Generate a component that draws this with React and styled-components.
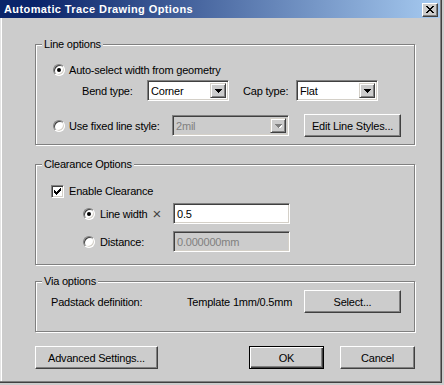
import React from "react";
import styled, { createGlobalStyle } from "styled-components";

const FACE = "#cccccc";

const GlobalStyle = createGlobalStyle`
  html, body {
    margin: 0;
    padding: 0;
    background: ${FACE};
  }
  body {
    font-family: "Liberation Sans", Arial, sans-serif;
    font-size: 11px;
    color: #000;
  }
`;

const Screen = styled.div`
  width: 444px;
  height: 385px;
  background: ${FACE};
`;

const Frame = styled.div`
  box-sizing: border-box;
  width: 442px;
  height: 383px;
  background: ${FACE};
  box-shadow: inset -1px -1px 0 #404040, inset -2px -2px 0 #808080,
    inset 1px 0 0 #e4e4e4, inset 2px 0 0 #ffffff;
  display: flex;
  flex-direction: column;
`;

const TitleBar = styled.div`
  height: 18px;
  margin-right: 2px;
  display: flex;
  align-items: center;
  background: linear-gradient(to right, #0a246a 0%, #0a246a 8%, #a6caf0 100%);
  color: #fff;
  font-weight: bold;
  font-size: 11px;
  padding-left: 4px;
  letter-spacing: 0.4px;
`;

const TitleText = styled.span`
  flex: 1;
  white-space: nowrap;
`;

const CloseButton = styled.div`
  box-sizing: border-box;
  width: 16px;
  height: 14px;
  margin: 1px 2px 0 0;
  background: ${FACE};
  border: 1px solid;
  border-color: #ffffff #404040 #404040 #ffffff;
  box-shadow: inset -1px -1px 0 #808080;
  display: flex;
  align-items: center;
  justify-content: center;
`;

const Body = styled.div`
  padding: 26px 0 0 35px;
  display: flex;
  flex-direction: column;
`;

const GroupBox = styled.div`
  position: relative;
  box-sizing: border-box;
  width: 380px;
  height: ${(p) => p.$h}px;
  margin-top: ${(p) => p.$mt || 0}px;
  padding: ${(p) => p.$pt}px 0 0 ${(p) => p.$pl}px;
  border: 1px solid #808080;
  box-shadow: inset 1px 1px 0 #ffffff, 1px 1px 0 #ffffff;
  display: flex;
  flex-direction: column;
`;

const GroupTitle = styled.span`
  position: absolute;
  top: -7px;
  left: 6px;
  padding: 0 2px;
  line-height: 13px;
  background: ${FACE};
  letter-spacing: -0.2px;
`;

const Row = styled.div`
  display: flex;
  align-items: center;
  height: ${(p) => p.$h}px;
  margin-top: ${(p) => p.$mt || 0}px;
  padding-left: ${(p) => p.$indent || 0}px;
`;

const Label = styled.span`
  flex: none;
  display: flex;
  align-items: center;
  width: ${(p) => (p.$w ? `${p.$w}px` : "auto")};
  margin-left: ${(p) => p.$ml || 0}px;
  white-space: nowrap;
  letter-spacing: -0.2px;
  color: ${(p) => (p.$disabled ? "#808080" : "#000")};
`;

const Times = styled.span`
  font-size: 15px;
  font-weight: 300;
  line-height: 11px;
  color: #444;
  margin-left: 5px;
`;

const RadioDot = styled.span`
  position: relative;
  flex: none;
  box-sizing: border-box;
  width: 12px;
  height: 12px;
  border-radius: 50%;
  background: #fff;
  border: 1px solid;
  border-color: #808080 #ffffff #ffffff #808080;
  box-shadow: inset 1px 1px 0 #404040, inset -1px -1px 0 #d4d0c8;

  &::after {
    content: "";
    display: ${(p) => (p.$checked ? "block" : "none")};
    position: absolute;
    left: 3px;
    top: 3px;
    width: 4px;
    height: 4px;
    border-radius: 50%;
    background: #000;
  }
`;

const CheckBox = styled.span`
  flex: none;
  box-sizing: border-box;
  width: 13px;
  height: 13px;
  background: #fff;
  border: 1px solid;
  border-color: #808080 #ffffff #ffffff #808080;
  box-shadow: inset 1px 1px 0 #404040, inset -1px -1px 0 #d4d0c8;
  display: flex;
  align-items: center;
  justify-content: center;
`;

const Sunken = styled.div`
  flex: none;
  box-sizing: border-box;
  width: ${(p) => p.$w}px;
  height: 21px;
  margin-left: ${(p) => p.$ml || 0}px;
  padding: 2px;
  border: 1px solid;
  border-color: #808080 #ffffff #ffffff #808080;
  box-shadow: inset 1px 1px 0 #404040, inset -1px -1px 0 #d4d0c8;
  background: ${(p) => (p.$disabled ? FACE : "#fff")};
  display: flex;
  align-items: stretch;
`;

const FieldText = styled.span`
  flex: 1;
  display: flex;
  align-items: center;
  padding-left: 1px;
  letter-spacing: -0.2px;
  color: ${(p) => (p.$disabled ? "#808080" : "#000")};
  white-space: nowrap;
`;

const DropButton = styled.span`
  flex: none;
  box-sizing: border-box;
  width: 16px;
  background: ${FACE};
  border: 1px solid;
  border-color: #d4d0c8 #404040 #404040 #d4d0c8;
  box-shadow: inset 1px 1px 0 #ffffff, inset -1px -1px 0 #808080;
  display: flex;
  align-items: center;
  justify-content: center;
`;

const Button = styled.div`
  flex: none;
  box-sizing: border-box;
  width: ${(p) => p.$w}px;
  height: 23px;
  margin-left: ${(p) => p.$ml || "0"};
  background: ${FACE};
  border: 1px solid;
  border-color: ${(p) =>
    p.$default ? "#000" : "#ffffff #404040 #404040 #ffffff"};
  box-shadow: ${(p) =>
    p.$default
      ? "inset 1px 1px 0 #ffffff, inset -1px -1px 0 #404040, inset -2px -2px 0 #808080"
      : "inset -1px -1px 0 #808080"};
  display: flex;
  align-items: center;
  justify-content: center;
  letter-spacing: -0.2px;
  white-space: nowrap;
`;

const ButtonBar = styled.div`
  display: flex;
  align-items: center;
  width: 380px;
  margin-top: 14px;
`;

const Arrow = ({ disabled }) => (
  <svg width="7" height="4" viewBox="0 0 7 4" shapeRendering="crispEdges">
    {disabled && <polygon points="1,1 8,1 4.5,5" fill="#fff" />}
    <polygon points="0,0 7,0 3.5,4" fill={disabled ? "#808080" : "#000"} />
  </svg>
);

const Combo = ({ value, width, ml, disabled }) => (
  <Sunken $w={width} $ml={ml} $disabled={disabled}>
    <FieldText $disabled={disabled}>{value}</FieldText>
    <DropButton>
      <Arrow disabled={disabled} />
    </DropButton>
  </Sunken>
);

const Edit = ({ value, width, ml, disabled }) => (
  <Sunken $w={width} $ml={ml} $disabled={disabled}>
    <FieldText $disabled={disabled}>{value}</FieldText>
  </Sunken>
);

const Radio = ({ checked }) => <RadioDot $checked={checked} />;

const Check = () => (
  <CheckBox>
    <svg width="7" height="7" viewBox="0 0 7 7" shapeRendering="crispEdges">
      <path
        d="M0 2h1v1h1v1h1v-1h1v-1h1v-1h1v-1h1v3h-1v1h-1v1h-1v1h-1v1h-1v-1h-1v-1h-1z"
        fill="#000"
      />
    </svg>
  </CheckBox>
);

const CloseGlyph = () => (
  <svg width="8" height="7" viewBox="0 0 8 7" shapeRendering="crispEdges">
    <path
      d="M0 0h2v1h1v1h2v-1h1v-1h2v1h-1v1h-1v1h-1v1h1v1h1v1h1v1h-2v-1h-1v-1h-2v1h-1v1h-2v-1h1v-1h1v-1h1v-1h-1v-1h-1v-1h-1z"
      fill="#000"
    />
  </svg>
);

const App = () => {
  return (
    <Screen>
      <GlobalStyle />
      <Frame>
        <TitleBar>
          <TitleText>Automatic Trace Drawing Options</TitleText>
          <CloseButton>
            <CloseGlyph />
          </CloseButton>
        </TitleBar>

        <Body>
          {/* line options */}
          <GroupBox $h={101} $pt={15} $pl={17}>
            <GroupTitle>Line options</GroupTitle>
            <Row $h={20}>
              <Radio checked />
              <Label $ml={4}>Auto-select width from geometry</Label>
            </Row>
            <Row $h={21} $indent={29}>
              <Label $w={65}>Bend type:</Label>
              <Combo value="Corner" width={82} />
              <Label $w={53} $ml={14}>
                Cap type:
              </Label>
              <Combo value="Flat" width={82} />
            </Row>
            <Row $h={23} $mt={13}>
              <Radio />
              <Label $w={103} $ml={4}>
                Use fixed line style:
              </Label>
              <Combo value="2mil" width={117} disabled />
              <Button $w={97} $ml="15px">
                Edit Line Styles...
              </Button>
            </Row>
          </GroupBox>

          {/* clearance */}
          <GroupBox $h={101} $mt={19} $pt={16} $pl={15}>
            <GroupTitle>Clearance Options</GroupTitle>
            <Row $h={20}>
              <Check />
              <Label $ml={5}>Enable Clearance</Label>
            </Row>
            <Row $h={21} $mt={2} $indent={32}>
              <Radio checked />
              <Label $w={73} $ml={5}>
                Line width<Times>×</Times>
              </Label>
              <Edit value="0.5" width={117} />
            </Row>
            <Row $h={21} $mt={7} $indent={32}>
              <Radio />
              <Label $w={73} $ml={5}>
                Distance:
              </Label>
              <Edit value="0.000000mm" width={117} disabled />
            </Row>
          </GroupBox>

          {/* via */}
          <GroupBox $h={51} $mt={16} $pt={8} $pl={15}>
            <GroupTitle>Via options</GroupTitle>
            <Row $h={23}>
              <Label $w={136}>Padstack definition:</Label>
              <Label $w={117}>Template 1mm/0.5mm</Label>
              <Button $w={97}>Select...</Button>
            </Row>
          </GroupBox>

          <ButtonBar>
            <Button $w={123}>Advanced Settings...</Button>
            <Button $w={75} $ml="auto" $default>
              OK
            </Button>
            <Button $w={75} $ml="16px">
              Cancel
            </Button>
          </ButtonBar>
        </Body>
      </Frame>
    </Screen>
  );
};

export default App;
